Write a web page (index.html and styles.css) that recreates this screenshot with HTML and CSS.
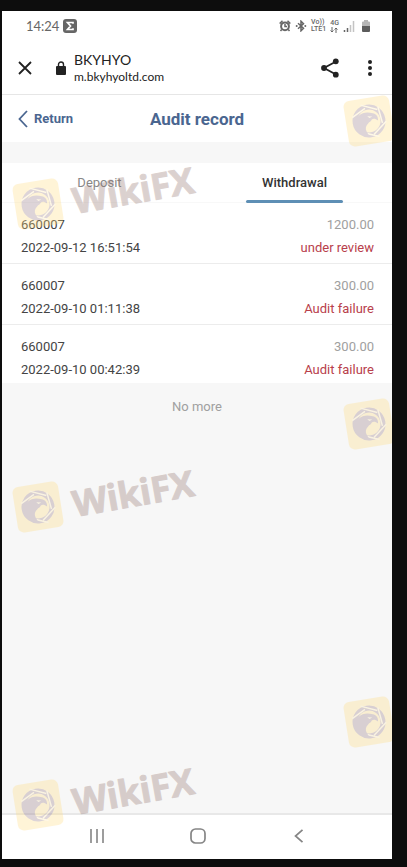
FILE: index.html
```html
<!DOCTYPE html>
<html lang="en">
<head>
    <meta charset="UTF-8">
    <meta name="viewport" content="width=device-width, initial-scale=1.0">
    <title>Audit record</title>
    <link rel="stylesheet" href="styles.css">
</head>
<body>

<!-- Shared watermark shapes -->
<svg class="defs" width="0" height="0" aria-hidden="true">
    <symbol id="logo" viewBox="0 0 56 56">
        <g transform="rotate(-9 28 28)">
            <rect x="5" y="5" width="46" height="46" rx="6" fill="#ffdc7d"/>
            <circle cx="28" cy="28" r="14" fill="none" stroke="#92757f" stroke-width="5"/>
            <path d="M22 11l16 7M39 15l2 17M45 31l-14 11M36 45l-12-5M12 22l14-7" fill="none" stroke="#ffe9b0" stroke-width="1.500"/>
            <path d="M12 26l7-5c4-3 10-2 14 0 3 1 5 4 4 8-2-2-4-3-6-2-1 2-3 2-4 3-3 2-4 5-3 8l2 5c-8-1-14-8-14-17z" fill="#92757f"/>
            <path d="M27 23l5 1-3 1z" fill="#ffe9b0"/>
        </g>
    </symbol>
</svg>

<div class="screen">
    <div class="status-bar">
        <span class="clock">14:24</span>
        <svg class="sigma" viewBox="0 0 14 14" width="14" height="14" aria-hidden="true">
            <rect width="14" height="14" rx="3" fill="#666"/>
            <path d="M10 4.700V3.500H4.500L7.500 7l-3 3.500H10V9.300" fill="none" stroke="#fff" stroke-width="1.700"/>
        </svg>
        <div class="status-icons">
            <svg viewBox="0 0 12 12" width="12" height="12" aria-hidden="true">
                <circle cx="6" cy="6.300" r="3.900" fill="none" stroke="#666" stroke-width="2"/>
                <path d="M6 4v2.500h2M.7 3.600L3.500 .8M8.500 .8l2.800 2.800M2.700 9.500L1.500 11M9.300 9.500l1.200 1.500" fill="none" stroke="#666" stroke-width="1.500"/>
            </svg>
            <svg viewBox="0 0 12 12" width="12" height="12" aria-hidden="true">
                <path d="M3 3.300l5.500 5L6 10.800V1.200l2.500 2.500L3 8.700" fill="none" stroke="#666" stroke-width="1.500"/>
                <circle cx="1.700" cy="6" r="1" fill="#666"/>
                <circle cx="10.300" cy="6" r="1" fill="#666"/>
            </svg>
            <span class="network">Vo))<br>LTE1</span>
            <span class="network">4G
                <svg viewBox="0 0 8 6" width="8" height="6" aria-hidden="true">
                    <path d="M2 0v5M.5 3.500L2 5l1.500-1.500M6 6V1M4.500 2.500L6 1l1.500 1.500" fill="none" stroke="#666"/>
                </svg>
            </span>
            <svg viewBox="0 0 12 12" width="12" height="12" aria-hidden="true">
                <path d="M1.500 12v-2M4.500 12V8" stroke="#666" stroke-width="1.500"/>
                <path d="M7.500 12V5M10.500 12V1" stroke="#c4c4c4" stroke-width="1.500"/>
            </svg>
            <svg class="battery" viewBox="0 0 8 12" width="8" height="12" aria-hidden="true">
                <path d="M2 0h4v1.500h1A1 1 0 0 1 8 2.500V7H0V2.500a1 1 0 0 1 1-1h1z" fill="#b5b5b5"/>
                <path d="M0 6h8v5a1 1 0 0 1-1 1H1a1 1 0 0 1-1-1z" fill="#5c5c5c"/>
            </svg>
        </div>
    </div>

    <div class="browser-bar">
        <button class="icon-button" type="button" aria-label="Close">
            <svg viewBox="0 0 14 14" width="14" height="14"><path d="M1 1l12 12M13 1L1 13" fill="none" stroke="#222" stroke-width="1.800"/></svg>
        </button>
        <svg class="lock" viewBox="0 0 10 14" width="10" height="14" aria-hidden="true">
            <path d="M2.500 6V3.500a2.500 2.500 0 0 1 5 0V6" fill="none" stroke="#222" stroke-width="1.400"/>
            <rect y="5" width="10" height="9" rx="1" fill="#222"/>
        </svg>
        <div class="site">
            <div class="site-name">BKYHYO</div>
            <div class="site-url">m.bkyhyoltd.com</div>
        </div>
        <button class="icon-button" type="button" aria-label="Share">
            <svg viewBox="0 0 18 20" width="18" height="20">
                <path d="M15 3.500L3 10l12 6.500" fill="none" stroke="#222" stroke-width="1.800"/>
                <circle cx="14.800" cy="3.300" r="2.900" fill="#222"/>
                <circle cx="3" cy="10" r="2.900" fill="#222"/>
                <circle cx="14.800" cy="16.700" r="2.900" fill="#222"/>
            </svg>
        </button>
        <button class="icon-button" type="button" aria-label="More">
            <svg viewBox="0 0 4 16" width="4" height="16">
                <circle cx="2" cy="2" r="2" fill="#222"/>
                <circle cx="2" cy="8" r="2" fill="#222"/>
                <circle cx="2" cy="14" r="2" fill="#222"/>
            </svg>
        </button>
    </div>

    <header class="page-header">
        <a class="return" href="#">
            <svg viewBox="0 0 10 18" width="10" height="18" aria-hidden="true"><path d="M9 1L1.500 9 9 17" fill="none" stroke="#4a6690" stroke-width="1.800"/></svg>
            <span>Return</span>
        </a>
        <h1>Audit record</h1>
    </header>

    <nav class="tabs">
        <button class="tab" type="button">Deposit</button>
        <button class="tab active" type="button">Withdrawal</button>
    </nav>

    <ul class="records">
        <li class="record">
            <span>660007</span>
            <span class="amount">1200.00</span>
            <span>2022-09-12 16:51:54</span>
            <span class="state">under review</span>
        </li>
        <li class="record">
            <span>660007</span>
            <span class="amount">300.00</span>
            <span>2022-09-10 01:11:38</span>
            <span class="state">Audit failure</span>
        </li>
        <li class="record">
            <span>660007</span>
            <span class="amount">300.00</span>
            <span>2022-09-10 00:42:39</span>
            <span class="state">Audit failure</span>
        </li>
    </ul>
    <p class="no-more">No more</p>

    <div class="nav-bar">
        <button class="icon-button" type="button" aria-label="Recent apps">
            <svg viewBox="0 0 14 14" width="14" height="14"><path d="M1 0v14M7 0v14M13 0v14" stroke="#858585" stroke-width="1.600"/></svg>
        </button>
        <button class="icon-button" type="button" aria-label="Home">
            <svg viewBox="0 0 16 16" width="16" height="16"><rect x="1" y="1" width="14" height="14" rx="4.500" fill="none" stroke="#858585" stroke-width="1.700"/></svg>
        </button>
        <button class="icon-button" type="button" aria-label="Back">
            <svg viewBox="0 0 10 14" width="10" height="14"><path d="M8.500 .8L1.500 7l7 6.200" fill="none" stroke="#858585" stroke-width="1.700"/></svg>
        </button>
    </div>

    <!-- Repeating watermark over the whole screen -->
    <div class="watermarks">
        <svg class="mark mark-right mark-1" width="56" height="56"><use href="#logo"/></svg>
        <svg class="mark mark-left mark-2" width="200" height="100">
            <use href="#logo" x="0" y="40" width="56" height="56"/>
            <text class="brand" x="65" y="78" transform="rotate(-10 65 78)">WikiFX</text>
        </svg>
        <svg class="mark mark-right mark-3" width="56" height="56"><use href="#logo"/></svg>
        <svg class="mark mark-left mark-4" width="200" height="100">
            <use href="#logo" x="0" y="40" width="56" height="56"/>
            <text class="brand" x="65" y="78" transform="rotate(-10 65 78)">WikiFX</text>
        </svg>
        <svg class="mark mark-right mark-5" width="56" height="56"><use href="#logo"/></svg>
        <svg class="mark mark-left mark-6" width="200" height="100">
            <use href="#logo" x="0" y="40" width="56" height="56"/>
            <text class="brand" x="65" y="78" transform="rotate(-10 65 78)">WikiFX</text>
        </svg>
    </div>
</div>

</body>
</html>
```
FILE: styles.css
```css
* {
    margin: 0;
    padding: 0;
    box-sizing: border-box;
}

body {
    min-height: 100vh;
    display: flex;
    padding: 11px 15px 8px 2px;
    background: #0d0d0d;
    font-family: Roboto, sans-serif;
    color: #444;
}

button {
    border: none;
    background: transparent;
    font: inherit;
    cursor: pointer;
}

svg {
    display: block;
}

.defs {
    position: absolute;
}

.screen {
    position: relative;
    flex: 1;
    display: flex;
    flex-direction: column;
    background: #f7f7f7;
}

/* Phone status bar */
.status-bar {
    height: 30px;
    display: flex;
    align-items: center;
    gap: 4px;
    padding: 0 22px 0 24px;
    background: #fff;
    color: #666;
}

.clock {
    font-family: "Comic Sans MS", Lato, sans-serif;
    font-size: 13px;
}

.status-icons {
    display: flex;
    align-items: center;
    gap: 4px;
    margin-left: auto;
}

.network {
    font-size: 7px;
    line-height: 7px;
    font-weight: 500;
}

.battery {
    margin-left: 3px;
}

/* Browser bar */
.browser-bar {
    height: 54px;
    display: flex;
    align-items: center;
    padding: 0 11px 0 12px;
    background: #fff;
    border-bottom: 1px solid #e6e6e6;
}

.icon-button {
    display: flex;
    align-items: center;
    justify-content: center;
    width: 22px;
    height: 30px;
}

.browser-bar .icon-button + .icon-button {
    margin-left: 18px;
}

.lock {
    margin: 0 8px 0 20px;
}

.site {
    flex: 1;
    font-family: "Comic Sans MS", Lato, sans-serif;
    color: #222;
}

.site-name {
    font-size: 14px;
    line-height: 18px;
}

.site-url {
    font-size: 12px;
    line-height: 16px;
}

/* Page header */
.page-header {
    height: 47px;
    display: grid;
    grid-template-columns: 1fr auto 1fr;
    align-items: center;
    padding: 0 16px;
    background: #fff;
    color: #4a6690;
}

.return {
    display: flex;
    align-items: center;
    gap: 6px;
    color: #4a6690;
    font-size: 13px;
    font-weight: 700;
    text-decoration: none;
}

.page-header h1 {
    font-size: 17px;
    font-weight: 700;
}

/* Tabs */
.tabs {
    height: 40px;
    display: grid;
    grid-template-columns: 1fr 1fr;
    margin-top: 21px;
    background: #fff;
    border-bottom: 1px solid #f8f8f8;
}

.tab {
    position: relative;
    color: #888;
    font-size: 13px;
}

.tab.active {
    color: #333;
    font-weight: 500;
}

.tab.active::after {
    content: "";
    position: absolute;
    left: 25%;
    right: 25%;
    bottom: -1px;
    height: 3px;
    border-radius: 2px;
    background: #5e8fb5;
}

/* Records */
.records {
    list-style: none;
}

.record {
    display: grid;
    grid-template-columns: 1fr auto;
    padding: 10px 18px 4px 19px;
    background: #fff;
    border-bottom: 1px solid #ececec;
    font-size: 13px;
    line-height: 23px;
}

.record:last-child {
    padding-bottom: 2px;
    border-bottom: none;
}

.amount,
.state {
    text-align: right;
}

.amount {
    color: #a0a0a0;
}

.state {
    color: #b8404b;
}

.no-more {
    padding-top: 12px;
    color: #a0a0a0;
    font-size: 13px;
    line-height: 23px;
    text-align: center;
}

/* Phone navigation bar */
.nav-bar {
    height: 46px;
    display: flex;
    align-items: center;
    justify-content: space-between;
    padding: 0 82px 3px 84px;
    margin-top: auto;
    background: #fff;
    border-top: 2px solid #e8e8e8;
}

/* Watermarks */
.watermarks {
    position: absolute;
    inset: 0;
    overflow: hidden;
    pointer-events: none;
}

.mark {
    position: absolute;
    opacity: 0.3;
    overflow: visible;
}

.mark-left {
    left: 8px;
}

.mark-right {
    right: -5px;
}

.mark-1 {
    top: 82px;
}

.mark-2 {
    top: 125px;
}

.mark-3 {
    top: 385px;
}

.mark-4 {
    top: 428px;
}

.mark-5 {
    top: 683px;
}

.mark-6 {
    top: 726px;
}

.brand {
    fill: #8c6b64;
    stroke: #8c6b64;
    stroke-width: 1px;
    stroke-linejoin: round;
    font-family: "Open Sans", "Noto Sans", sans-serif;
    font-size: 36px;
    font-weight: 700;
}
```
